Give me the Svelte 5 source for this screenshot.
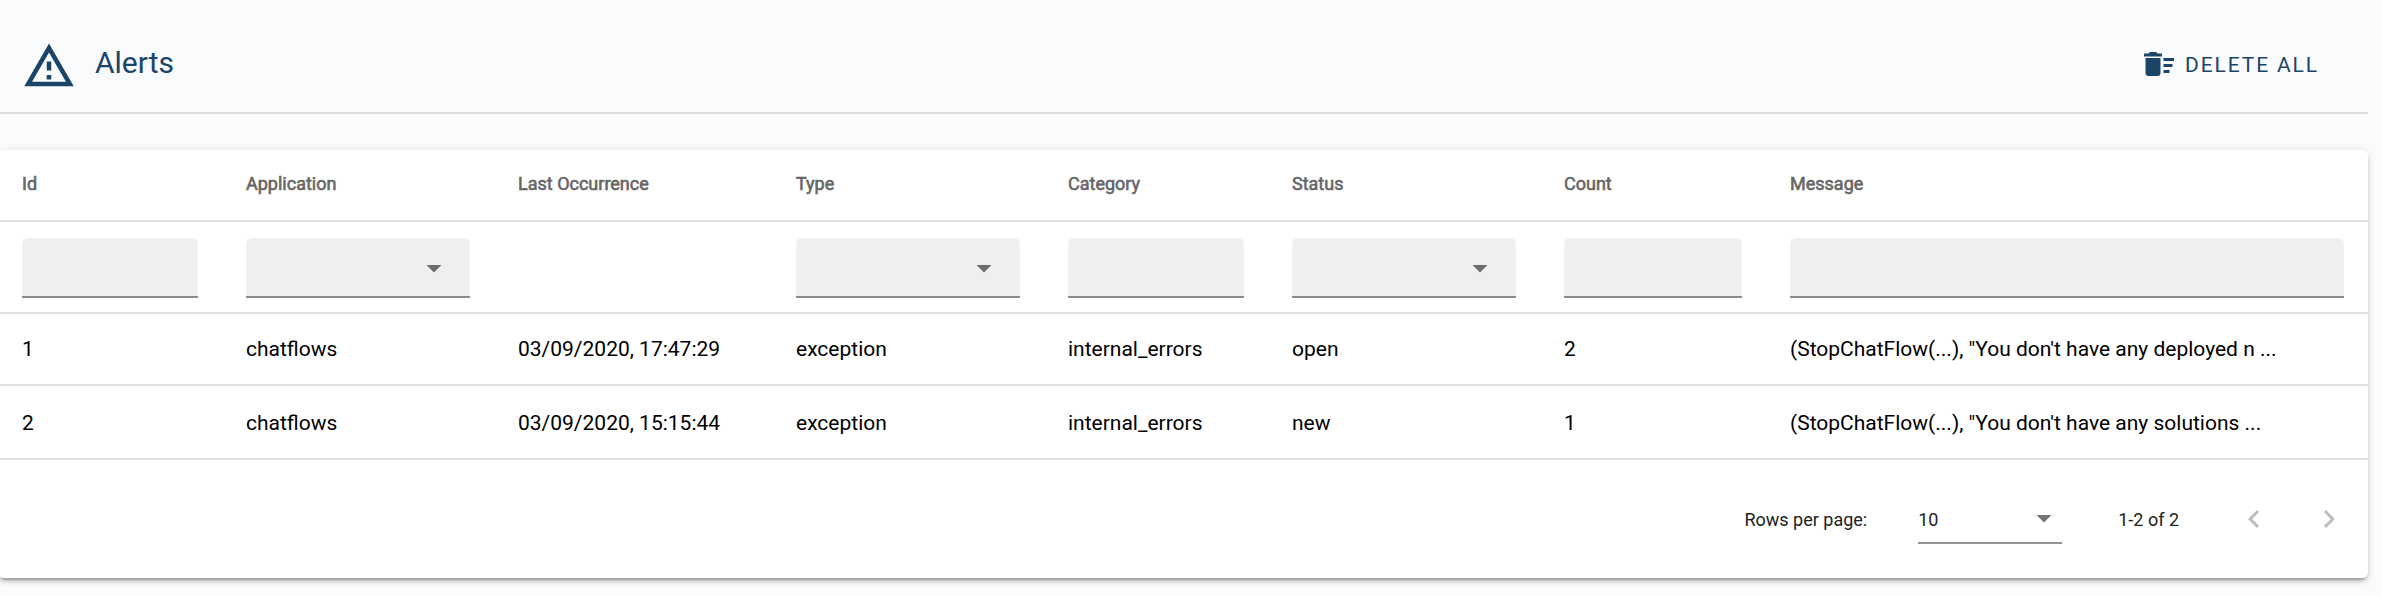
<script>
  const columns = [
    { key: 'id', label: 'Id', filter: 'text' },
    { key: 'application', label: 'Application', filter: 'select' },
    { key: 'lastOccurrence', label: 'Last Occurrence', filter: null },
    { key: 'type', label: 'Type', filter: 'select' },
    { key: 'category', label: 'Category', filter: 'text' },
    { key: 'status', label: 'Status', filter: 'select' },
    { key: 'count', label: 'Count', filter: 'text' },
    { key: 'message', label: 'Message', filter: 'text' }
  ];

  const rows = [
    {
      id: 1,
      application: 'chatflows',
      lastOccurrence: '03/09/2020, 17:47:29',
      type: 'exception',
      category: 'internal_errors',
      status: 'open',
      count: 2,
      message: '(StopChatFlow(...), "You don\'t have any deployed n ...'
    },
    {
      id: 2,
      application: 'chatflows',
      lastOccurrence: '03/09/2020, 15:15:44',
      type: 'exception',
      category: 'internal_errors',
      status: 'new',
      count: 1,
      message: '(StopChatFlow(...), "You don\'t have any solutions ...'
    }
  ];
</script>

{#snippet arrow()}
  <svg class="icon" viewBox="0 0 24 24"><path d="M7,10L12,15L17,10H7Z" /></svg>
{/snippet}

<main class="page">
  <header class="toolbar">
    <svg class="title-icon" viewBox="0 0 24 24">
      <path d="M12,2L1,21H23M12,6L19.53,19H4.47M11,10V14H13V10M11,16V18H13V16" />
    </svg>
    <h1>Alerts</h1>
    <button class="delete-all">
      <svg class="icon" viewBox="0 0 24 24">
        <path d="M15,16H19V18H15V16M15,8H22V10H15V8M15,12H21V14H15V12M3,18A2,2 0 0,0 5,20H11A2,2 0 0,0 13,18V8H3V18M14,5H11L10,4H6L5,5H2V7H14V5Z" />
      </svg>
      <span>DELETE ALL</span>
    </button>
  </header>

  <section class="card">
    <div class="row head">
      {#each columns as col (col.key)}
        <div class="cell">{col.label}</div>
      {/each}
    </div>
    <div class="row filters">
      {#each columns as col (col.key)}
        <div class="cell">
          {#if col.filter}
            <div class="field">
              {#if col.filter === 'select'}{@render arrow()}{/if}
            </div>
          {/if}
        </div>
      {/each}
    </div>
    {#each rows as row (row.id)}
      <div class="row body">
        {#each columns as col (col.key)}
          <div class="cell">{row[col.key]}</div>
        {/each}
      </div>
    {/each}
    <footer class="pager">
      <span class="label">Rows per page:</span>
      <div class="size"><span>10</span>{@render arrow()}</div>
      <span class="range">1-2 of 2</span>
      <div class="nav">
        <svg class="icon" viewBox="0 0 24 24"><path d="M15.41,16.58L10.83,12L15.41,7.41L14,6L8,12L14,18L15.41,16.58Z" /></svg>
        <svg class="icon" viewBox="0 0 24 24"><path d="M8.59,16.58L13.17,12L8.59,7.41L10,6L16,12L10,18L8.59,16.58Z" /></svg>
      </div>
    </footer>
  </section>
</main>

<style>
  :global(body) {
    background: #fafbfd;
  }

  .page {
    box-sizing: border-box;
    height: 596px;
    padding-right: 14px;
    overflow: hidden;
    font-family: Roboto, sans-serif;
    color: #000;
    background: #fafbfd;
  }

  .icon {
    display: block;
    flex: none;
    width: 36px;
    height: 36px;
    fill: currentColor;
  }

  .toolbar {
    box-sizing: border-box;
    display: flex;
    align-items: center;
    height: 114px;
    padding: 16px 49px 0 22px;
    border-bottom: 2px solid #dbdcde;
    color: #1b4568;
  }

  .title-icon {
    width: 54px;
    height: 54px;
    margin-top: 4px;
    fill: currentColor;
  }

  h1 {
    margin: 0 0 2px 19px;
    font-size: 30px;
    font-weight: 400;
    line-height: 40px;
  }

  .delete-all {
    display: flex;
    align-items: center;
    gap: 8px;
    margin-left: auto;
    padding: 0;
    border: 0;
    background: none;
    color: inherit;
    font: 400 21px/36px Roboto, sans-serif;
    letter-spacing: 1.875px;
  }

  .delete-all span {
    padding-top: 2px;
  }

  .card {
    margin: 36px 0 0 -2px;
    border-radius: 6px;
    background: #fff;
    box-shadow:
      0 6px 2px -4px rgba(0, 0, 0, 0.2),
      0 4px 4px 0 rgba(0, 0, 0, 0.14),
      0 2px 10px 0 rgba(0, 0, 0, 0.12);
  }

  .row {
    box-sizing: border-box;
    display: grid;
    grid-template-columns: 224px 272px 278px 272px 224px 272px 226px 1fr;
    align-items: center;
    border-bottom: 2px solid #e0e0e0;
  }

  .cell {
    padding: 0 24px;
    white-space: nowrap;
  }

  .head {
    height: 72px;
    padding-bottom: 4px;
    font-size: 18px;
    -webkit-text-stroke: 0.6px #666;
    color: #666;
  }

  .filters {
    height: 92px;
    padding-top: 2px;
  }

  .field {
    box-sizing: border-box;
    display: flex;
    align-items: center;
    justify-content: flex-end;
    height: 60px;
    padding: 2px 18px 0 0;
    border-bottom: 2px solid #8b8b8b;
    border-radius: 6px 6px 0 0;
    background: #efefef;
    color: #6c6c6c;
  }

  .body {
    height: 72px;
    font-size: 21px;
  }

  .body + .body {
    height: 74px;
    padding-top: 1px;
  }

  .pager {
    display: flex;
    align-items: center;
    justify-content: flex-end;
    height: 118px;
    padding-right: 21px;
    font-size: 18px;
    color: #212121;
  }

  .size {
    box-sizing: border-box;
    display: flex;
    align-items: center;
    justify-content: space-between;
    width: 144px;
    height: 50px;
    margin: 0 56px 0 51px;
    border-bottom: 2px solid #949494;
  }

  .size span {
    padding-top: 2px;
  }

  .size .icon {
    color: #757575;
  }

  .nav {
    display: flex;
    gap: 39px;
    margin-left: 57px;
    color: #bdbdbd;
  }
</style>
